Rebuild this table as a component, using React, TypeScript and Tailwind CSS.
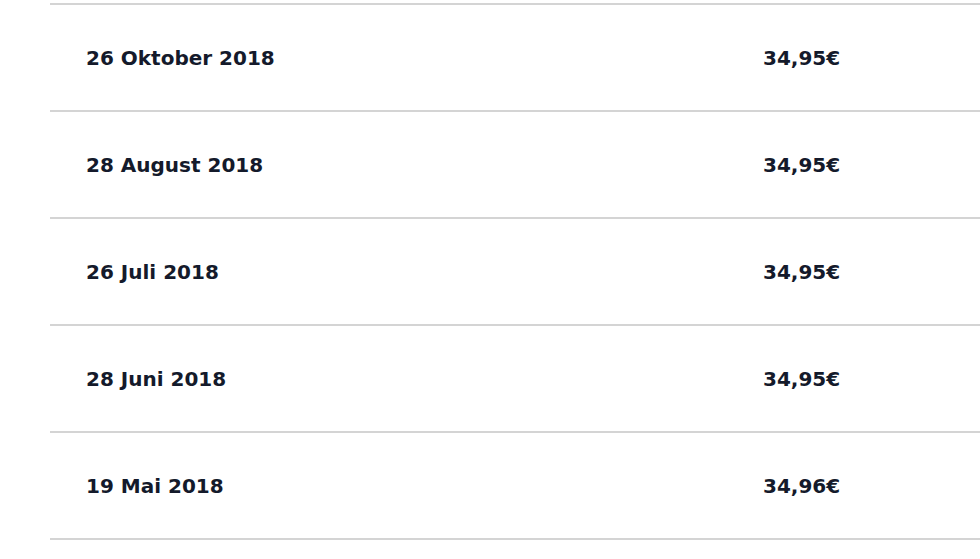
const rows = [
  { date: '26 Oktober 2018', amount: '34,95€' },
  { date: '28 August 2018', amount: '34,95€' },
  { date: '26 Juli 2018', amount: '34,95€' },
  { date: '28 Juni 2018', amount: '34,95€' },
  { date: '19 Mai 2018', amount: '34,96€' },
];

export default function App() {
  return (
    <div className="min-h-screen bg-white pt-[3px] pl-[50px] overflow-hidden" style={{ fontFamily: '"DejaVu Sans", "Open Sans", sans-serif' }}>
      <div className="border-t-2 border-[#d4d4d4] w-[960px]">
        {rows.map((r) => (
          <div key={r.date} className="flex items-center h-[107px] border-b-2 border-[#d4d4d4] text-[20px] font-bold text-[#141a2b]">
            <div className="pl-[36px] w-[713px]">{r.date}</div>
            <div>{r.amount}</div>
          </div>
        ))}
      </div>
    </div>
  );
}
